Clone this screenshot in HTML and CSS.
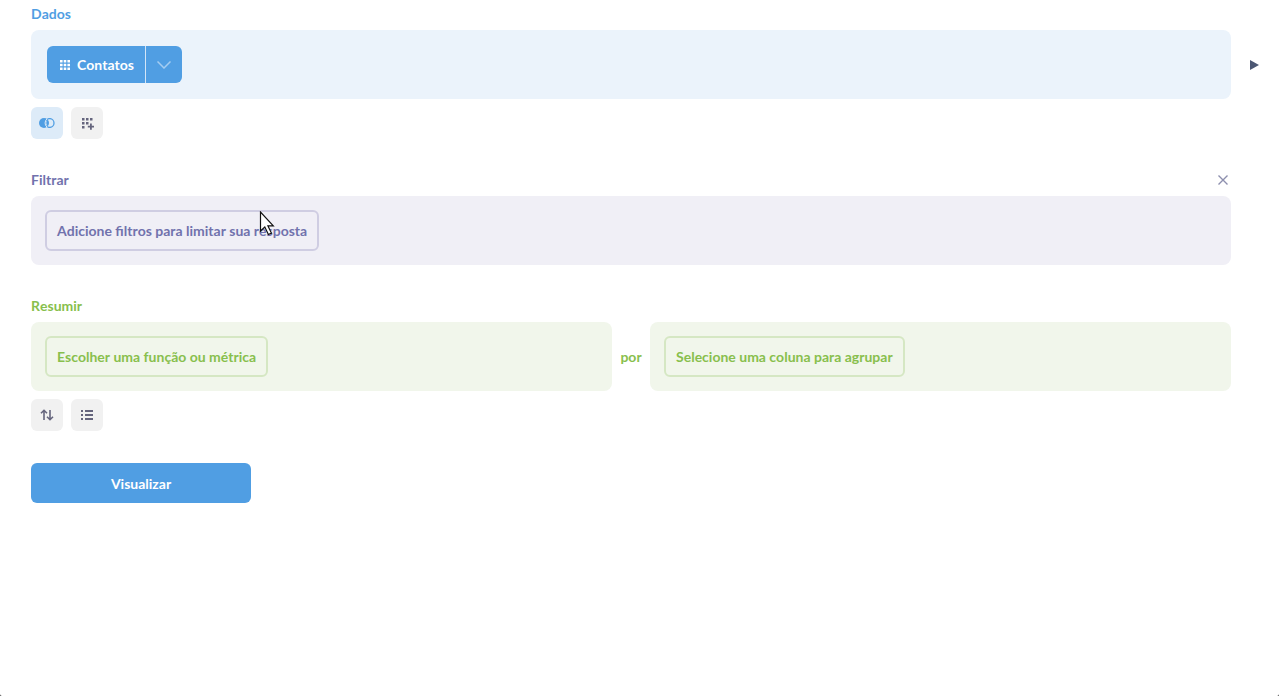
FILE: index.html
```
<!DOCTYPE html>
<html lang="pt-BR">
<head>
    <meta charset="utf-8">
    <title>Nova pergunta</title>
    <link rel="stylesheet" href="styles.css">
</head>
<body>
    <main class="notebook">
        <section class="step step-data">
            <div class="step-header">
                <h2 class="step-title">Dados</h2>
            </div>
            <div class="step-row">
                <div class="cell cell-data">
                    <div class="picker">
                        <button class="picker-table">
                            <svg width="10" height="10" viewBox="0 0 10 10" fill="currentColor"><path d="M0 0h2.6v2.6H0zM3.7 0h2.6v2.6H3.7zM7.4 0H10v2.6H7.4zM0 3.7h2.6v2.6H0zM3.7 3.7h2.6v2.6H3.7zM7.4 3.7H10v2.6H7.4zM0 7.4h2.6V10H0zM3.7 7.4h2.6V10H3.7zM7.4 7.4H10V10H7.4z"/></svg>
                            Contatos
                        </button>
                        <button class="picker-columns" aria-label="Escolher colunas">
                            <svg width="14" height="8" viewBox="0 0 14 8" fill="none" stroke="currentColor" stroke-width="1.5"><path d="M.5.5 7 7 13.5.5"/></svg>
                        </button>
                    </div>
                </div>
                <button class="preview" aria-label="Pré-visualizar">
                    <svg width="9" height="10" viewBox="0 0 9 10" fill="currentColor"><path d="M0 0 9 5 0 10z"/></svg>
                </button>
            </div>
            <div class="actions">
                <button class="action action-join" aria-label="Juntar dados">
                    <svg width="16" height="10" viewBox="0 0 16 10"><circle cx="5" cy="5" r="5" fill="currentColor"/><circle cx="10.6" cy="5" r="4.4" fill="#ddebf8" stroke="currentColor" stroke-width="1.3"/><path d="M8 .8a5.600 5.600 0 0 0 0 8.400" fill="none" stroke="#ddebf8"/><path d="M8.600 1.600a4.800 4.800 0 0 1 0 6.800A5.500 5.500 0 0 1 8.600 1.600z" fill="currentColor"/></svg>
                </button>
                <button class="action" aria-label="Coluna personalizada">
                    <svg width="13" height="13" viewBox="0 0 13 13" fill="currentColor"><path d="M1 1h2.5v2.5H1zM5 1h2.500v2.5H5zM9 1h2.500v2.5H9zM1 5h2.500v2.5H1zM5 5h2.500v2.5H5zM1 9h2.500v2.5H1zM9 6.500h1.800v2.200H13v1.800h-2.200v2.200H9v-2.200H6.800V8.700H9z"/></svg>
                </button>
            </div>
        </section>

        <section class="step step-filter">
            <div class="step-header">
                <h2 class="step-title">Filtrar</h2>
                <button class="step-remove" aria-label="Remover filtro">
                    <svg width="10" height="10" viewBox="0 0 10 10" fill="none" stroke="currentColor" stroke-width="1.4"><path d="M.5.5l9 9M9.5.5l-9 9"/></svg>
                </button>
            </div>
            <div class="step-row">
                <div class="cell">
                    <button class="add-clause">Adicione filtros para limitar sua resposta</button>
                </div>
            </div>
        </section>

        <section class="step step-summarize">
            <div class="step-header">
                <h2 class="step-title">Resumir</h2>
            </div>
            <div class="step-row">
                <div class="cell">
                    <button class="add-clause">Escolher uma função ou métrica</button>
                </div>
                <span class="by">por</span>
                <div class="cell">
                    <button class="add-clause">Selecione uma coluna para agrupar</button>
                </div>
            </div>
            <div class="actions">
                <button class="action" aria-label="Ordenar">
                    <svg width="14" height="12" viewBox="0 0 14 12" fill="none" stroke="currentColor" stroke-width="1.6"><path d="M4 11V1.5M1 4.300l3-3 3 3M10 1v9.500M7 7.700l3 3 3-3"/></svg>
                </button>
                <button class="action" aria-label="Limite de linhas">
                    <svg width="12" height="10" viewBox="0 0 12 10" fill="currentColor"><path d="M0 0h2v2H0zM4 0h8v2H4zM0 4h2v2H0zM4 4h8v2H4zM0 8h2v2H0zM4 8h8v2H4z"/></svg>
                </button>
            </div>
        </section>

        <button class="visualize">Visualizar</button>
    </main>

    <svg class="cursor" width="16" height="26" viewBox="0 0 16 26"><path d="M1.5 1v19l4.300-4 3.600 7.500 3-1.400-3.500-7.300h5.400z" fill="#fff" stroke="#111" stroke-width="1.2"/></svg>
</body>
</html>
```
FILE: styles.css
```
* {
    box-sizing: border-box;
}
html {
    background: #333;
}
body {
    margin: 0;
    min-height: 100vh;
    background: #fff;
    border-radius: 0 0 2px 2px;
    font-family: Lato, "Liberation Sans", sans-serif;
    font-size: 14px;
    font-weight: 700;
    font-kerning: none;
    line-height: 20px;
}
button {
    display: flex;
    align-items: center;
    justify-content: center;
    padding: 0;
    border: none;
    background: none;
    color: inherit;
    font: inherit;
    font-kerning: inherit;
    cursor: pointer;
}
svg {
    display: block;
    flex: none;
}
.notebook {
    padding: 4px 48px 0 31px;
}

/* steps */
.step {
    margin-bottom: 32px;
}
.step-data {
    --tint: #ebf3fb;
    color: #509ee3;
    margin-bottom: 31px;
}
.step-filter {
    --tint: #f0eff6;
    --line: #cfcde2;
    color: #7172ad;
    margin-bottom: 31px;
}
.step-summarize {
    --tint: #f1f6eb;
    --line: #d5e7c3;
    color: #88bf4d;
}
.step-header {
    display: flex;
    align-items: center;
    justify-content: space-between;
    margin-bottom: 6px;
}
.step-title {
    margin: 0;
    font-size: 14px;
}
.step-remove {
    width: 16px;
    height: 16px;
    color: #8d8fae;
}
.step-row {
    display: flex;
    align-items: center;
}
.cell {
    flex: 1;
    display: flex;
    padding: 14px;
    background: var(--tint);
    border-radius: 8px;
}
.cell-data {
    padding: 16px;
}
.add-clause {
    padding: 9px 10px 8px;
    border: 2px solid var(--line);
    border-radius: 6px;
}
.add-clause:hover {
    border-color: currentColor;
}
.by {
    width: 38px;
    text-align: center;
}

/* table picker */
.picker {
    display: flex;
    height: 37px;
    border-radius: 6px;
    background: #509ee3;
    color: #fff;
}
.picker-table {
    gap: 7px;
    padding: 0 11px 0 13px;
}
.picker-columns {
    width: 37px;
    border-left: 1px solid #d3e5f7;
    color: #a5cdf1;
}
.preview {
    width: 46px;
    height: 32px;
    margin-right: -46px;
    color: #4c5773;
}

/* extra step buttons */
.actions {
    display: flex;
    gap: 8px;
    margin-top: 8px;
}
.action {
    width: 32px;
    height: 32px;
    border-radius: 6px;
    background: #f1f1f1;
    color: #65657d;
}
.action-join {
    background: #ddebf8;
    color: #509ee3;
}

.visualize {
    width: 220px;
    height: 40px;
    padding-top: 2px;
    border-radius: 6px;
    background: #509ee3;
    color: #fff;
}

/* mouse pointer */
.cursor {
    position: absolute;
    top: 211px;
    left: 259px;
    pointer-events: none;
}
```
